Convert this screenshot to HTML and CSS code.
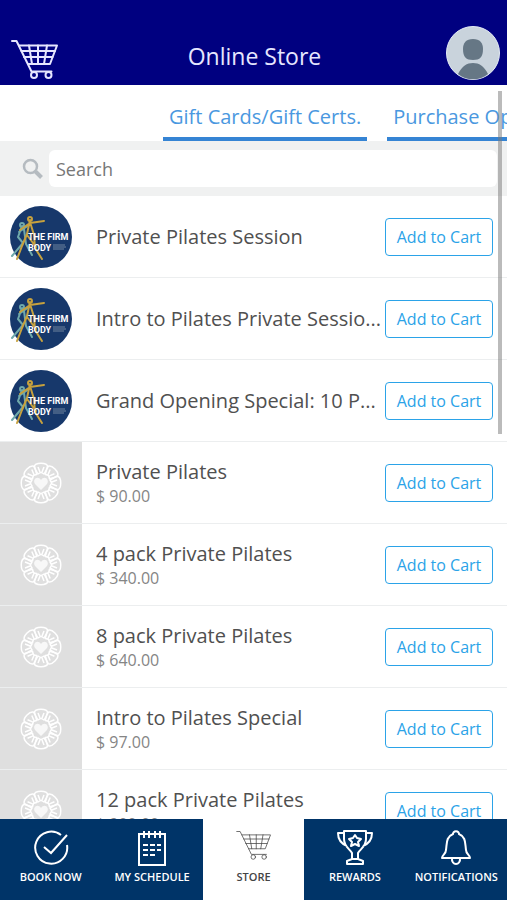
FILE: index.html
```html
<!DOCTYPE html>
<html lang="en">
<head>
    <meta charset="UTF-8">
    <meta name="viewport" content="width=device-width, initial-scale=1.0">
    <title>Online Store</title>
    <link rel="stylesheet" href="styles.css">
</head>
<body>
    <!-- Shared icons -->
    <svg class="sprite">
        <symbol id="icon-cart" viewBox="0 0 48 40">
            <g fill="none" stroke="currentColor" stroke-linecap="round" stroke-linejoin="round">
                <path d="M1 2h4.500l15 30.500h20"/>
                <path d="M8 6.500h38l-7 18.500H17"/>
                <path d="M10.500 12h33.500M13 18h28.500M18 6.500l3 18.500M27 6.500v18.500M36 6.500l-3 18.500"/>
                <circle cx="23" cy="36" r="3"/>
                <circle cx="37.500" cy="36" r="3"/>
            </g>
        </symbol>
        <symbol id="logo" viewBox="0 0 62 62">
            <circle cx="31" cy="31" r="31" fill="#17386b"/>
            <g fill="none" stroke-linecap="round" stroke-linejoin="round">
                <path d="M12 20l-4 11 5 6-11 13M14 23l2 15 6 11M9 26l10-7" stroke="#6fa9ab" stroke-width="2"/>
                <circle cx="12" cy="19" r="2" stroke="#6fa9ab" stroke-width="2"/>
                <path d="M20 14l-3 14-5 12-5 13M20 16l4 13 1 13 7 11M10 24l10-7 14-2M17 29l9 12" stroke="#c7a13e" stroke-width="2"/>
                <circle cx="20" cy="13" r="2" stroke="#c7a13e" stroke-width="2"/>
            </g>
            <text x="18" y="34" class="logo-text">THE FIRM</text>
            <text x="18" y="45" class="logo-text">BODY</text>
            <path d="M43 39h12M43 41h13M43 43h11" stroke="#71849f" stroke-width="1"/>
        </symbol>
        <symbol id="flower" viewBox="-21 -21 42 42">
            <g fill="none" stroke="#fff" stroke-width="1.500" stroke-linejoin="round">
                <path id="petal" d="M-7-16C-6-21 6-21 7-16L3-9C0-11 0-11-3-9ZM-3-16L-1-11M3-16L1-11"/>
                <use href="#petal" transform="rotate(45)"/>
                <use href="#petal" transform="rotate(90)"/>
                <use href="#petal" transform="rotate(135)"/>
                <use href="#petal" transform="rotate(180)"/>
                <use href="#petal" transform="rotate(225)"/>
                <use href="#petal" transform="rotate(270)"/>
                <use href="#petal" transform="rotate(315)"/>
            </g>
            <path d="M0 7L-6 1C-9-4-3-8 0-3C3-8 9-4 6 1Z" fill="#f8f8f8"/>
        </symbol>
    </svg>

    <header class="header">
        <button type="button" class="icon-button" aria-label="Cart">
            <svg class="header-cart"><use href="#icon-cart"/></svg>
        </button>
        <h1>Online Store</h1>
        <button type="button" class="icon-button avatar" aria-label="Profile">
            <svg viewBox="0 0 54 54">
                <circle cx="27" cy="27" r="26.500" fill="#c9d3dc" stroke="#e3eaf5"/>
                <path d="M27 13c7 0 10 4 10 10 0 8-3 11-10 11s-10-3-10-11c0-6 3-10 10-10z" fill="#667785"/>
                <path d="M12 48c4-8 9-11 15-11s11 3 15 11c-8 7-22 7-30 0z" fill="#667785"/>
            </svg>
        </button>
    </header>

    <main class="store">
        <div class="tabs">
            <a href="#gift" class="tab">Gift Cards/Gift Certs.</a>
            <a href="#purchase" class="tab">Purchase Options</a>
        </div>

        <form class="search">
            <label for="search" aria-label="Search">
                <svg class="search-icon" viewBox="0 0 22 22">
                    <circle cx="8.500" cy="8.500" r="6.500" fill="none" stroke="#b5bbc0" stroke-width="2.500"/>
                    <path d="M13.500 13.500l6 6" stroke="#b5bbc0" stroke-width="4"/>
                </svg>
            </label>
            <input type="text" id="search" placeholder="Search">
        </form>

        <ul class="items">
            <li class="item">
                <div class="thumb"><svg class="logo"><use href="#logo"/></svg></div>
                <div class="info"><h2>Private Pilates Session</h2></div>
                <button type="button" class="add">Add to Cart</button>
            </li>
            <li class="item">
                <div class="thumb"><svg class="logo"><use href="#logo"/></svg></div>
                <div class="info"><h2>Intro to Pilates Private Sessio...</h2></div>
                <button type="button" class="add">Add to Cart</button>
            </li>
            <li class="item">
                <div class="thumb"><svg class="logo"><use href="#logo"/></svg></div>
                <div class="info"><h2>Grand Opening Special: 10 P...</h2></div>
                <button type="button" class="add">Add to Cart</button>
            </li>
            <li class="item">
                <div class="thumb empty"><svg class="flower"><use href="#flower"/></svg></div>
                <div class="info"><h2>Private Pilates</h2><p>$ 90.00</p></div>
                <button type="button" class="add">Add to Cart</button>
            </li>
            <li class="item">
                <div class="thumb empty"><svg class="flower"><use href="#flower"/></svg></div>
                <div class="info"><h2>4 pack Private Pilates</h2><p>$ 340.00</p></div>
                <button type="button" class="add">Add to Cart</button>
            </li>
            <li class="item">
                <div class="thumb empty"><svg class="flower"><use href="#flower"/></svg></div>
                <div class="info"><h2>8 pack Private Pilates</h2><p>$ 640.00</p></div>
                <button type="button" class="add">Add to Cart</button>
            </li>
            <li class="item">
                <div class="thumb empty"><svg class="flower"><use href="#flower"/></svg></div>
                <div class="info"><h2>Intro to Pilates Special</h2><p>$ 97.00</p></div>
                <button type="button" class="add">Add to Cart</button>
            </li>
            <li class="item">
                <div class="thumb empty"><svg class="flower"><use href="#flower"/></svg></div>
                <div class="info"><h2>12 pack Private Pilates</h2><p>$ 900.00</p></div>
                <button type="button" class="add">Add to Cart</button>
            </li>
        </ul>
        <div class="scrollbar"></div>
    </main>

    <nav class="nav">
        <a href="#book">
            <svg viewBox="0 0 36 36" fill="none" stroke="currentColor" stroke-width="2">
                <path d="M28 5A16 16 0 1 0 34 15M11 17l7 6L34 5"/>
            </svg>
            Book Now
        </a>
        <a href="#schedule">
            <svg viewBox="0 0 36 36" fill="none" stroke="currentColor" stroke-width="2">
                <path d="M5 4h26v31H5zM10 1v7M15 1v7M21 1v7M26 1v7"/>
                <path d="M9 15h18M9 20h18M9 25h12" stroke-dasharray="5 2"/>
            </svg>
            My Schedule
        </a>
        <a href="#store" class="active">
            <svg viewBox="0 0 36 36"><use href="#icon-cart" width="36" height="30"/></svg>
            Store
        </a>
        <a href="#rewards">
            <svg viewBox="0 0 36 36" fill="none" stroke="currentColor" stroke-width="2" stroke-linejoin="round">
                <path d="M7 1h22v8c0 8-6 10-8 14v6h-6v-6C13 19 7 17 7 9zM7 3H1c0 8 4 11 9 13M29 3h6c0 8-4 11-9 13M10 34v-3l5-2h6l5 2v3z"/>
                <path d="M18 5l2 3 4 1-3 3 1 4-4-2-4 2 1-4-3-3 4-1z"/>
            </svg>
            Rewards
        </a>
        <a href="#notifications">
            <svg viewBox="0 0 36 36" fill="none" stroke="currentColor" stroke-width="2" stroke-linejoin="round">
                <path d="M15 4C8 7 9 13 8 20c0 4-4 5-4 8h28c0-3-4-4-4-8-1-7 0-13-7-16M15 5c-1-5 7-5 6 0M14 28c-1 8 9 8 8 0"/>
            </svg>
            Notifications
        </a>
    </nav>
</body>
</html>
```
FILE: styles.css
```css
* {
    box-sizing: border-box;
}

body {
    font-family: "Open Sans", "Noto Sans", sans-serif;
    background-color: #fff;
    color: #505050;
    margin: 0;
    height: 100vh;
    display: flex;
    flex-direction: column;
    overflow: hidden;
}

h1, h2, p, ul {
    margin: 0;
    padding: 0;
}

button {
    font-family: inherit;
    cursor: pointer;
}

.sprite {
    display: none;
}

.header {
    display: flex;
    align-items: center;
    justify-content: space-between;
    flex-shrink: 0;
    padding: 26px 7px 5px 11px;
    background-color: #000080;
    color: #e6e6ff;
}

.header h1 {
    padding: 5px 0 0 4px;
    font-size: 23px;
    line-height: 30px;
    font-weight: 400;
}

.icon-button {
    display: flex;
    padding: 0;
    border: none;
    background: none;
    color: inherit;
}

.header-cart {
    width: 48px;
    height: 40px;
    margin-top: 12px;
    stroke-width: 2;
}

.avatar svg {
    width: 54px;
    height: 54px;
}

.store {
    position: relative;
    flex: 1;
    min-height: 0;
    display: flex;
    flex-direction: column;
}

.tabs {
    display: flex;
    flex-shrink: 0;
    gap: 20px;
    padding: 10px 0 0 163px;
    overflow: hidden;
}

.tab {
    flex-shrink: 0;
    padding: 8px 6px 6px;
    border-bottom: 4px solid #3584d4;
    color: #4a98e0;
    font-size: 20px;
    line-height: 28px;
    text-decoration: none;
    white-space: nowrap;
}

.search {
    display: flex;
    align-items: center;
    flex-shrink: 0;
    padding: 9px 10px 9px 22px;
    background-color: #f0f1f1;
}

.search label {
    display: flex;
    width: 27px;
}

.search-icon {
    width: 22px;
    height: 22px;
}

.search input {
    flex: 1;
    min-width: 0;
    height: 37px;
    padding: 0 7px;
    border: none;
    border-radius: 6px;
    background-color: #fff;
    font-family: inherit;
    font-size: 18px;
}

.search input::placeholder {
    color: #777;
}

.items {
    flex: 1;
    min-height: 0;
    overflow: hidden;
    list-style: none;
}

.item {
    display: flex;
    align-items: center;
    height: 82px;
    padding-right: 14px;
    border-bottom: 1px solid #eceeef;
}

.thumb {
    display: flex;
    align-items: center;
    justify-content: center;
    flex-shrink: 0;
    align-self: stretch;
    width: 82px;
}

.thumb.empty {
    background-color: #dfdfdf;
}

.logo {
    width: 62px;
    height: 62px;
}

.logo-text {
    font-family: Roboto, sans-serif;
    font-size: 9px;
    font-weight: 700;
    fill: #fff;
}

.flower {
    width: 42px;
    height: 42px;
}

.info {
    flex: 1;
    min-width: 0;
    padding: 0 2px 0 14px;
}

.info h2 {
    overflow: hidden;
    font-size: 20px;
    line-height: 28px;
    font-weight: 400;
    text-overflow: ellipsis;
    white-space: nowrap;
}

.info p {
    padding-bottom: 2px;
    color: #858585;
    font-size: 16px;
    line-height: 20px;
}

.add {
    flex-shrink: 0;
    width: 108px;
    height: 38px;
    padding: 0;
    border: 1px solid #2ba3e8;
    border-radius: 4px;
    background-color: #fff;
    color: #2ba3e8;
    font-size: 16px;
}

.scrollbar {
    position: absolute;
    top: 6px;
    right: 5px;
    width: 4px;
    height: 343px;
    background-color: rgba(120, 120, 120, 0.5);
}

.nav {
    display: flex;
    flex-shrink: 0;
}

.nav a {
    display: flex;
    flex: 1 1 0;
    min-width: 0;
    flex-direction: column;
    align-items: center;
    gap: 2px;
    padding: 11px 0 14px;
    background-color: #003468;
    color: #fff;
    font-size: 11px;
    line-height: 18px;
    font-weight: 600;
    text-decoration: none;
    text-transform: uppercase;
    white-space: nowrap;
}

.nav .active {
    background-color: #fff;
    color: #444;
}

.nav svg {
    width: 36px;
    height: 36px;
}
```
